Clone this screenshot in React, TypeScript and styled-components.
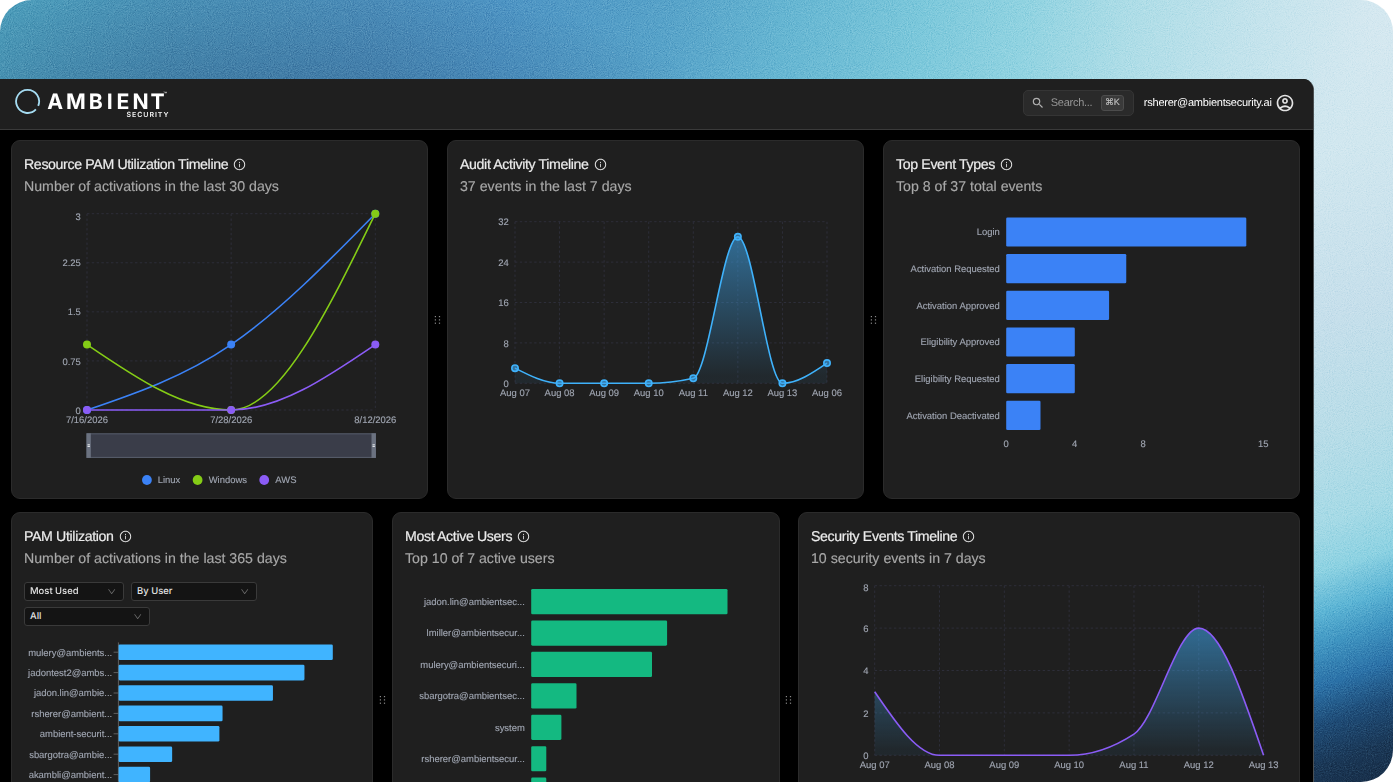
import React from "react";
import styled, { createGlobalStyle } from "styled-components";
import { AiOutlineDown, AiOutlineInfoCircle } from "react-icons/ai";
import { MdOutlineAccountCircle, MdSearch } from "react-icons/md";

const SANS = `"Liberation Sans", Arial, Helvetica, sans-serif`;

const GlobalStyle = createGlobalStyle`
  * { box-sizing: border-box; }
  html, body { margin: 0; padding: 0; background: #fff; overflow: hidden; }
  body { font-family: ${SANS}; text-rendering: geometricPrecision; -webkit-font-smoothing: antialiased; }
`;

/* ---------- page shell ---------- */

const Backdrop = styled.div`
  position: relative;
  width: 1393px;
  height: 782px;
  padding-top: 79px;
  border-radius: 32px;
  background:
    linear-gradient(161deg, rgba(212, 233, 241, 0) 5%, #d1e7ef 20%, #c6dfeb 40%, #b9dde8 54%, #a6dae6 65%, #8dd2e2 71%, #5cb5d5 76%, #4096c2 80%, #2b72a8 85%, #1e4b76 90%, #1a3756 95%, #172d47 100%) right top / 79px 100% no-repeat,
    radial-gradient(ellipse 460px 130px at 250px 110px, rgba(44, 84, 128, 0.45), rgba(44, 84, 128, 0) 100%),
    linear-gradient(97deg, #4d9fbc 0%, #4b93b8 12%, #4c8fbb 25%, #4e95c4 34%, #57a3c9 45%, #66b6d2 53%, #7cc8db 62%, #91d3e1 69%, #aedde7 76%, #c3e3ec 84%, #d4e8f0 92%, #dbe9f1 100%);
`;

const Grain = styled.svg`
  position: absolute;
  inset: 0;
  width: 100%;
  height: 100%;
  border-radius: 32px;
  mix-blend-mode: soft-light;
  opacity: 0.5;
`;

const Window = styled.main`
  position: relative;
  display: flex;
  flex-direction: column;
  width: 1314px;
  height: 703px;
  overflow: hidden;
  background: #000;
  border-right: 1px solid #4a4f52;
  border-top-right-radius: 11px;
`;

const TopBar = styled.header`
  flex: none;
  display: flex;
  align-items: center;
  justify-content: space-between;
  height: 51px;
  padding: 0 18.4px 3px 14px;
  background: #1f1f1f;
  border-bottom: 1px solid #3a3a3a;
`;

const Logo = styled.svg`
  display: block;
  width: 160px;
  height: 34px;
`;

const TopActions = styled.div`
  display: flex;
  align-items: center;
`;

const SearchBox = styled.div`
  display: flex;
  align-items: center;
  width: 111px;
  height: 26px;
  padding: 0 9px 0 7.4px;
  border: 1px solid #353535;
  border-radius: 5px;
  background: #2a2a2a;
  color: #949494;
  font-size: 11px;
  letter-spacing: -0.27px;
  svg { color: #b0b0b0; margin-right: 5.6px; }
`;

const Shortcut = styled.kbd`
  display: flex;
  align-items: center;
  justify-content: center;
  width: 23px;
  height: 16px;
  margin-left: auto;
  border: 1px solid #4c4c4c;
  border-radius: 3px;
  background: #3a3a3a;
  color: #bcbcbc;
  font-family: "Liberation Sans", "DejaVu Sans", sans-serif;
  font-size: 9px;
  letter-spacing: -0.2px;
  -webkit-text-stroke: 0.2px #bcbcbc;
`;

const Account = styled.div`
  display: flex;
  align-items: center;
  gap: 3px;
  margin-left: 10px;
  color: #fff;
  font-size: 11.02px;
  letter-spacing: -0.24px;
  svg { color: #e2e2e2; }
`;

/* ---------- dashboard ---------- */

const Board = styled.section`
  display: flex;
  flex-direction: column;
  gap: 13px;
  padding: 10px 13px 0 11px;
`;

const Row = styled.div<{ $height: number }>`
  flex: none;
  display: flex;
  height: ${(p) => p.$height}px;
`;

const Card = styled.article<{ $width: number }>`
  flex: none;
  display: flex;
  flex-direction: column;
  width: ${(p) => p.$width}px;
  overflow: hidden;
  border: 1px solid #2b2b2b;
  border-radius: 9px;
  background: #1f1f1f;
`;

const CardHead = styled.div`
  flex: none;
  height: 59px;
  padding: 12.5px 12px 0;
`;

const Title = styled.h2`
  display: flex;
  align-items: center;
  gap: 5px;
  height: 22px;
  margin: 0;
  color: #ececec;
  font-size: 14.16px;
  font-weight: 400;
  letter-spacing: -0.36px;
  -webkit-text-stroke: 0.2px #ececec;
  white-space: nowrap;
  svg { stroke-width: 0; }
`;

const Subtitle = styled.p`
  height: 22px;
  margin: 0;
  color: #a8a8a8;
  font-size: 14.16px;
  line-height: 22px;
  -webkit-text-stroke: 0.15px #a8a8a8;
  white-space: nowrap;
`;

const Gutter = styled.div<{ $width: number }>`
  flex: none;
  display: flex;
  align-items: center;
  justify-content: center;
  width: ${(p) => p.$width}px;
`;

const GripDots = styled.svg`
  display: block;
  width: 8px;
  height: 10px;
`;

const Filters = styled.div`
  flex: none;
  display: flex;
  flex-wrap: wrap;
  gap: 6px 7px;
  padding: 10px 12px 0;
`;

const Select = styled.div<{ $width: number }>`
  display: flex;
  align-items: center;
  justify-content: space-between;
  width: ${(p) => p.$width}px;
  height: 19px;
  padding: 0 7px 0 5px;
  border: 1px solid #3a3a3a;
  border-radius: 3px;
  background: #141414;
  color: #e2e2e2;
  font-family: Inter, ${SANS};
  font-size: 9.45px;
  font-weight: 500;
  svg { color: #707070; }
`;

const Plot = styled.svg`
  flex: none;
  display: block;
  text {
    font-family: ${SANS};
    font-size: 9.45px;
    fill: #a1a7b3;
    stroke: #a1a7b3;
    stroke-width: 0.12px;
  }
`;

/* ---------- chart helpers ---------- */

type Pt = { x: number; y: number };

/* Monotone cubic interpolation in x. */
function monotone(pts: Pt[]): string {
  const n = pts.length;
  const slope = (i: number) => (pts[i + 1].y - pts[i].y) / (pts[i + 1].x - pts[i].x);
  const m: number[] = new Array(n).fill(0);
  for (let i = 1; i < n - 1; i++) {
    const h0 = pts[i].x - pts[i - 1].x;
    const h1 = pts[i + 1].x - pts[i].x;
    const s0 = slope(i - 1);
    const s1 = slope(i);
    const p = (s0 * h1 + s1 * h0) / (h0 + h1);
    m[i] = (Math.sign(s0) + Math.sign(s1)) * Math.min(Math.abs(s0), Math.abs(s1), 0.5 * Math.abs(p)) || 0;
  }
  m[0] = (3 * slope(0) - m[1]) / 2;
  m[n - 1] = (3 * slope(n - 2) - m[n - 2]) / 2;
  let d = `M${pts[0].x},${pts[0].y}`;
  for (let i = 0; i < n - 1; i++) {
    const dx = (pts[i + 1].x - pts[i].x) / 3;
    d += `C${pts[i].x + dx},${pts[i].y + dx * m[i]},${pts[i + 1].x - dx},${pts[i + 1].y - dx * m[i + 1]},${pts[i + 1].x},${pts[i + 1].y}`;
  }
  return d;
}

type Frame = { left: number; right: number; top: number; bottom: number };

const spread = (a: number, b: number, n: number) =>
  Array.from({ length: n }, (_, i) => a + ((b - a) * i) / (n - 1));

function Axes({ frame, xs, ys, topShift }: { frame: Frame; xs: string[]; ys: string[]; topShift: number }) {
  const gx = spread(frame.left, frame.right, xs.length);
  const gy = spread(frame.bottom, frame.top, ys.length);
  return (
    <g>
      <g stroke="#2f303c" strokeWidth={0.9} strokeDasharray="2.4 2.4">
        {gy.map((y, i) => <line key={i} x1={frame.left} x2={frame.right} y1={y} y2={y} />)}
        {gx.map((x, i) => <line key={i} x1={x} x2={x} y1={frame.top} y2={frame.bottom} />)}
      </g>
      {ys.map((t, i) => (
        <text key={t} x={frame.left - 6.2} y={gy[i] + 3.6 + (i === ys.length - 1 ? topShift : 0)} textAnchor="end">{t}</text>
      ))}
      {xs.map((t, i) => (
        <text key={t} x={gx[i]} y={frame.bottom + 12.9} textAnchor="middle">{t}</text>
      ))}
    </g>
  );
}

function place(frame: Frame, values: number[], max: number): Pt[] {
  const xs = spread(frame.left, frame.right, values.length);
  return values.map((v, i) => ({ x: xs[i], y: frame.bottom - (v / max) * (frame.bottom - frame.top) }));
}

/* ---------- charts ---------- */

const SERIES = [
  { name: "Linux", color: "#3b82f6", values: [0, 1, 3], dot: 134.9, label: 145.7 },
  { name: "Windows", color: "#84cc16", values: [1, 0, 3], dot: 185.6, label: 196.7 },
  { name: "AWS", color: "#8b5cf6", values: [0, 0, 1], dot: 252.2, label: 263.3 },
];

function PamTimeline() {
  const frame = { left: 75, right: 363.3, top: 13.7, bottom: 210 };
  return (
    <Plot width={415} height={298}>
      <Axes frame={frame} xs={["7/16/2026", "7/28/2026", "8/12/2026"]} ys={["0", "0.75", "1.5", "2.25", "3"]} topShift={3} />
      {SERIES.map((s) => {
        const pts = place(frame, s.values, 3);
        return (
          <g key={s.name}>
            <path d={monotone(pts)} fill="none" stroke={s.color} strokeWidth={1.6} />
            {pts.map((p, i) => <circle key={i} cx={p.x} cy={p.y} r={4} fill={s.color} />)}
          </g>
        );
      })}
      <rect x={75} y={233.8} width={288.5} height={23.6} fill="#3a3d49" stroke="#59606e" strokeWidth={1} />
      {[74.5, 359.5].map((x) => (
        <g key={x}>
          <rect x={x} y={233.3} width={4.3} height={24.6} fill="#6b7280" />
          <path d={`M${x + 1} 244.8h2.4M${x + 1} 246.4h2.4`} stroke="#eceef1" strokeWidth={1} />
        </g>
      ))}
      {SERIES.map((s) => (
        <g key={s.name}>
          <circle cx={s.dot} cy={280} r={4.9} fill={s.color} />
          <text x={s.label} y={283.2}>{s.name}</text>
        </g>
      ))}
    </Plot>
  );
}

function FadeDown({ id }: { id: string }) {
  return (
    <defs>
      <linearGradient id={id} x1="0" y1="0" x2="0" y2="1">
        <stop offset="5%" stopColor="#40a9f0" stopOpacity={0.53} />
        <stop offset="95%" stopColor="#40a9f0" stopOpacity={0.07} />
      </linearGradient>
    </defs>
  );
}

function AuditTimeline() {
  const frame = { left: 67, right: 379, top: 21.7, bottom: 183.3 };
  const pts = place(frame, [3, 0, 0, 0, 1, 29, 0, 4], 32);
  const line = monotone(pts);
  return (
    <Plot width={415} height={298}>
      <FadeDown id="audit-fill" />
      <Axes
        frame={frame}
        xs={["Aug 07", "Aug 08", "Aug 09", "Aug 10", "Aug 11", "Aug 12", "Aug 13", "Aug 06"]}
        ys={["0", "8", "16", "24", "32"]}
        topShift={0}
      />
      <path d={`${line}L${frame.right},${frame.bottom}L${frame.left},${frame.bottom}Z`} fill="url(#audit-fill)" />
      <path d={line} fill="none" stroke="#3fb2fb" strokeWidth={1.6} />
      {pts.map((p, i) => (
        <circle key={i} cx={p.x} cy={p.y} r={3.2} fill="#40a9f0" fillOpacity={0.6} stroke="#3fb2fb" strokeWidth={1.6} />
      ))}
    </Plot>
  );
}

function SecurityTimeline() {
  const frame = { left: 75.7, right: 464.6, top: 13.7, bottom: 183.3 };
  const line = monotone(place(frame, [3, 0, 0, 0, 1, 6, 0], 8));
  return (
    <Plot width={500} height={298}>
      <FadeDown id="security-fill" />
      <Axes
        frame={frame}
        xs={["Aug 07", "Aug 08", "Aug 09", "Aug 10", "Aug 11", "Aug 12", "Aug 13"]}
        ys={["0", "2", "4", "6", "8"]}
        topShift={2}
      />
      <path d={`${line}L${frame.right},${frame.bottom}L${frame.left},${frame.bottom}Z`} fill="url(#security-fill)" />
      <path d={line} fill="none" stroke="#8b5cf6" strokeWidth={1.6} />
    </Plot>
  );
}

type BarsProps = {
  width: number;
  left: number;
  top: number;
  pitch: number;
  thickness: number;
  unit: number;
  color: string;
  data: [string, number][];
  ticks?: number[];
  axisLine?: boolean;
};

function Bars({ width, left, top, pitch, thickness, unit, color, data, ticks = [], axisLine }: BarsProps) {
  const end = top + pitch * data.length;
  return (
    <Plot width={width} height={298}>
      {axisLine && <line x1={left} x2={left} y1={top - 2} y2={298} stroke="#666" strokeWidth={0.9} />}
      {data.map(([name, value], i) => {
        const y = top + i * pitch;
        const mid = y + thickness / 2;
        return (
          <g key={i}>
            {axisLine && <line x1={left - 4.8} x2={left} y1={mid} y2={mid} stroke="#666" strokeWidth={0.9} />}
            {name && <text x={left - 6.2} y={mid + 3.4} textAnchor="end">{name}</text>}
            <rect x={left + 0.2} y={y} width={value * unit} height={thickness} rx={1.3} fill={color} />
          </g>
        );
      })}
      {ticks.map((t) => (
        <text key={t} x={left + t * unit} y={end + 9.1} textAnchor="middle">{t}</text>
      ))}
    </Plot>
  );
}

/* ---------- pieces ---------- */

function Grip({ width }: { width: number }) {
  return (
    <Gutter $width={width}>
      <GripDots viewBox="0 0 8 10">
        {[1.4, 5.5].map((x) => [1.6, 4.9, 8.2].map((y) => (
          <rect key={`${x}-${y}`} x={x - 0.6} y={y - 0.6} width={1.2} height={1.2} fill="#8a8a8a" />
        )))}
      </GripDots>
    </Gutter>
  );
}

function Head({ title, subtitle }: { title: string; subtitle: string }) {
  return (
    <CardHead>
      <Title>{title}<AiOutlineInfoCircle size={13} /></Title>
      <Subtitle>{subtitle}</Subtitle>
    </CardHead>
  );
}

function Brand() {
  return (
    <Logo viewBox="0 0 160 34">
      <path d="M24.2 19.9A11.5 11.5 0 1 0 21.9 23.4" fill="none" stroke="#a5dcf2" strokeWidth="1.8" />
      <text x="33.2 52 74.8 92.8 102.6 118.4 136.4" y="23.3" fill="#fff" fontFamily="Inter, sans-serif" fontWeight="700" fontSize="21.2">AMBIENT</text>
      <text x="112.4" y="31.2" fill="#f2f2f2" fontFamily="Inter, sans-serif" fontWeight="600" fontSize="7" letterSpacing="0.98">SECURITY</text>
      <text x="149.2" y="9.6" fill="#ddd" fontFamily="Inter, sans-serif" fontWeight="600" fontSize="6">™</text>
    </Logo>
  );
}

export default function App() {
  return (
    <>
      <GlobalStyle />
      <Backdrop>
        <Grain>
          <filter id="grain" x="0" y="0" width="100%" height="100%" colorInterpolationFilters="sRGB">
            <feTurbulence type="fractalNoise" baseFrequency="0.95" numOctaves={2} />
            <feColorMatrix values="0.6 0.6 0.6 0 -0.4 0.6 0.6 0.6 0 -0.4 0.6 0.6 0.6 0 -0.4 0 0 0 0 1" />
          </filter>
          <rect width="100%" height="100%" filter="url(#grain)" />
        </Grain>
        <Window>
          <TopBar>
            <Brand />
            <TopActions>
              <SearchBox>
                <MdSearch size={14} />
                Search...
                <Shortcut>⌘K</Shortcut>
              </SearchBox>
              <Account>
                rsherer@ambientsecurity.ai
                <MdOutlineAccountCircle size={20} />
              </Account>
            </TopActions>
          </TopBar>
          <Board>
            <Row $height={359}>
              <Card $width={417}>
                <Head title="Resource PAM Utilization Timeline" subtitle="Number of activations in the last 30 days" />
                <PamTimeline />
              </Card>
              <Grip width={19} />
              <Card $width={417}>
                <Head title="Audit Activity Timeline" subtitle="37 events in the last 7 days" />
                <AuditTimeline />
              </Card>
              <Grip width={19} />
              <Card $width={417}>
                <Head title="Top Event Types" subtitle="Top 8 of 37 total events" />
                <Bars
                  width={415} left={122} top={17.4} pitch={36.67} thickness={29.2} unit={17.15} color="#3b82f6"
                  ticks={[0, 4, 8, 15]}
                  data={[
                    ["Login", 14],
                    ["Activation Requested", 7],
                    ["Activation Approved", 6],
                    ["Eligibility Approved", 4],
                    ["Eligibility Requested", 4],
                    ["Activation Deactivated", 2],
                  ]}
                />
              </Card>
            </Row>
            <Row $height={375}>
              <Card $width={362}>
                <Head title="PAM Utilization" subtitle="Number of activations in the last 365 days" />
                <Filters>
                  <Select $width={100}>Most Used<AiOutlineDown size={9.4} /></Select>
                  <Select $width={126}>By User<AiOutlineDown size={9.4} /></Select>
                  <Select $width={126}>All<AiOutlineDown size={9.4} /></Select>
                </Filters>
                <Bars
                  width={360} left={106.4} top={18.4} pitch={20.4} thickness={15.6} unit={3.15} color="#40b4ff" axisLine
                  data={[
                    ["mulery@ambients...", 68],
                    ["jadontest2@ambs...", 59],
                    ["jadon.lin@ambie...", 49],
                    ["rsherer@ambient...", 33],
                    ["ambient-securit...", 32],
                    ["sbargotra@ambie...", 17],
                    ["akambli@ambient...", 10],
                  ]}
                />
              </Card>
              <Grip width={19} />
              <Card $width={388}>
                <Head title="Most Active Users" subtitle="Top 10 of 7 active users" />
                <Bars
                  width={386} left={138} top={17} pitch={31.43} thickness={25.2} unit={15.1} color="#14b981"
                  data={[
                    ["jadon.lin@ambientsec...", 13],
                    ["lmiller@ambientsecur...", 9],
                    ["mulery@ambientsecuri...", 8],
                    ["sbargotra@ambientsec...", 3],
                    ["system", 2],
                    ["rsherer@ambientsecur...", 1],
                    ["", 1],
                  ]}
                />
              </Card>
              <Grip width={18} />
              <Card $width={502}>
                <Head title="Security Events Timeline" subtitle="10 security events in 7 days" />
                <SecurityTimeline />
              </Card>
            </Row>
          </Board>
        </Window>
      </Backdrop>
    </>
  );
}
